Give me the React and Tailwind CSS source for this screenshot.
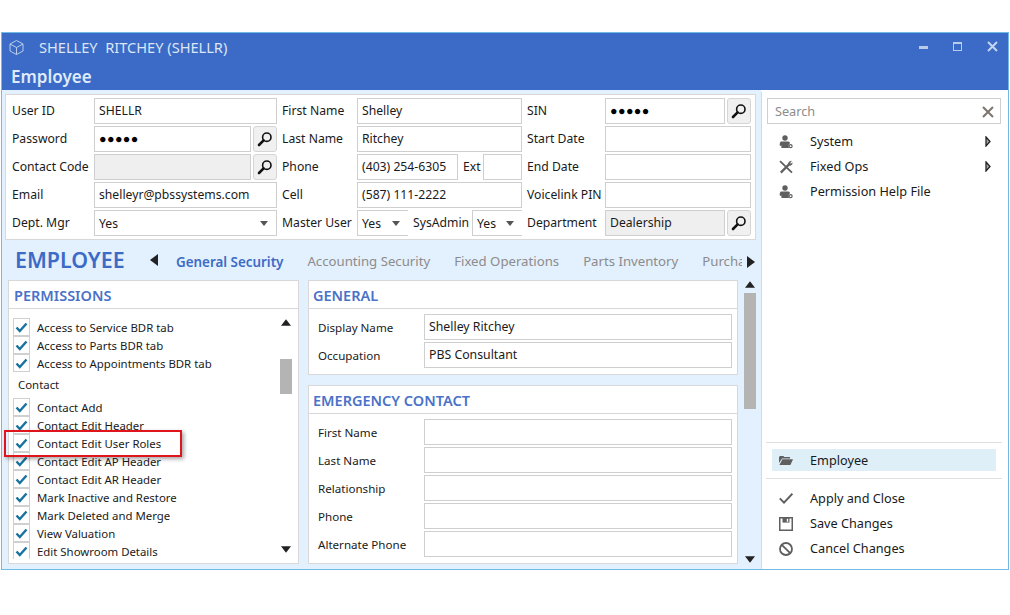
import React from 'react';

const SearchIcon = () => (
    <svg width="16" height="16" viewBox="0 0 16 16" fill="none">
        <circle cx="9.8" cy="6.2" r="4.2" stroke="#111" strokeWidth="1.6" />
        <path d="M6.6 9.4 2 14" stroke="#111" strokeWidth="2.6" strokeLinecap="round" />
    </svg>
);

const UserIcon = () => (
    <svg width="14" height="14" viewBox="0 0 14 14">
        <circle cx="6" cy="3" r="2.7" fill="#5f5f5f" />
        <path d="M2.2 6.4h7.2c1 0 1.4.8 1.6 1.8l-1.2 1.2V13H2.4V10.6L1.4 11 .6 10c.2-2 .6-3.6 1.6-3.6z" fill="#5f5f5f" />
        <circle cx="11.6" cy="11.2" r="1.5" fill="none" stroke="#5f5f5f" strokeWidth="1.2" />
    </svg>
);

const ToolsIcon = () => (
    <svg width="14" height="14" viewBox="0 0 14 14" fill="none">
        <path d="M1 1.2 13 12.6" stroke="#5f5f5f" strokeWidth="1.8" />
        <path d="M1.8 12.6 10 4.4" stroke="#5f5f5f" strokeWidth="2.2" />
        <path d="M8.8 3.4 10.6 1.2 13 0.8 11.2 3 11.8 3.8 13.6 2.2 13.2 4.6 11 6z" fill="#5f5f5f" />
    </svg>
);

const FolderIcon = () => (
    <svg width="14" height="9" viewBox="0 0 14 9">
        <path d="M0 1.2 .8 0h3.6l.8 1H11v1.4H3L0 7z" fill="#5f5f5f" />
        <path d="M3.4 3.2H14L11.4 9H.4z" fill="#5f5f5f" />
    </svg>
);

const TickIcon = () => (
    <svg width="14" height="11" viewBox="0 0 14 11" fill="none"><path d="M.8 5.4 5 9.6 13.4.8" stroke="#5f5f5f" strokeWidth="2" /></svg>
);

const SaveIcon = () => (
    <svg width="14" height="14" viewBox="0 0 14 14" fill="none">
        <path d="M.75.75h12.5v12.5H.75z" stroke="#5f5f5f" strokeWidth="1.5" />
        <path d="M3.5 1h7v4.6h-7z" fill="#5f5f5f" />
        <path d="M7.8 1.8h1.4v3H7.8z" fill="#fff" />
    </svg>
);

const BanIcon = () => (
    <svg width="14" height="14" viewBox="0 0 14 14" fill="none">
        <circle cx="7" cy="7" r="6" stroke="#5f5f5f" strokeWidth="1.8" />
        <path d="M2.8 2.8l8.4 8.4" stroke="#5f5f5f" strokeWidth="1.8" />
    </svg>
);

const CheckBox = () => (
    <div className="w-[17px] h-[18px] shrink-0 border border-[#d0d0d0] flex items-center justify-center bg-white">
        <svg width="13" height="11" viewBox="0 0 13 11" fill="none">
            <path d="M1.5 5.5 4.8 9 11.5 1.5" stroke="#17729f" strokeWidth="2.4" />
        </svg>
    </div>
);

const Triangle = ({ dir, className }) => {
    const paths = { up: '0,8 6,0 12,8', down: '0,0 12,0 6,8', left: '8,0 8,12 0,6', right: '0,0 8,6 0,12' };
    const vert = dir === 'up' || dir === 'down';
    return (
        <svg width={vert ? 12 : 8} height={vert ? 8 : 12} viewBox={vert ? '0 0 12 8' : '0 0 8 12'} className={className}>
            <polygon points={paths[dir]} fill="#222" />
        </svg>
    );
};

const Box = ({ children, className = 'bg-white' }) => (
    <div className={`h-[26px] border border-[#cfcfcf] flex items-center pl-[4px] text-[#1a1a1a] ${className}`}>{children}</div>
);

const Dots = () => <span className="text-[12.5px] tracking-[0.4px] leading-none text-black">●●●●●</span>;

const Btn = () => (
    <div className="w-[24px] h-[26px] ml-[2px] shrink-0 border border-[#d5d5d5] rounded-[3px] bg-[#f0f0f0] flex items-center justify-center"><SearchIcon /></div>
);

const Caret = () => (
    <svg width="8" height="5" viewBox="0 0 8 5"><polygon points="0,0 8,0 4,5" fill="#555" /></svg>
);

const Row = ({ children }) => <div className="h-[26px] flex items-center">{children}</div>;

const Label = ({ children, w }) => <div className={`${w} shrink-0 whitespace-nowrap`}>{children}</div>;

const perms = [
    { t: 'Access to Service BDR tab', c: true },
    { t: 'Access to Parts BDR tab', c: true },
    { t: 'Access to Appointments BDR tab', c: true },
    { t: 'Contact', c: false },
    { t: 'Contact Add', c: true },
    { t: 'Contact Edit Header', c: true },
    { t: 'Contact Edit User Roles', c: true },
    { t: 'Contact Edit AP Header', c: true },
    { t: 'Contact Edit AR Header', c: true },
    { t: 'Mark Inactive and Restore', c: true },
    { t: 'Mark Deleted and Merge', c: true },
    { t: 'View Valuation', c: true },
    { t: 'Edit Showroom Details', c: true },
];

const Section = ({ title, rows, className = '' }) => (
    <div className={`bg-white border border-[#d8d8d8] ${className}`}>
        <div className="h-[28px] border-b border-[#d8d8d8] flex items-center pl-[4px] pt-[2px] text-[14.5px] font-semibold text-[#4a72c8]">{title}</div>
        <div className="pt-[5px] flex flex-col gap-[2px]">
            {rows.map(r => (
                <div key={r[0]} className="flex items-center">
                    <div className="w-[115px] pl-[9px] pt-[2px] shrink-0 text-[11.6px]">{r[0]}</div>
                    <Box className="w-[308px] bg-white text-[12.3px]">{r[1]}</Box>
                </div>
            ))}
        </div>
    </div>
);

const MenuItem = ({ icon, label, arrow }) => (
    <div className="h-[25px] flex items-center">
        <div className="w-[14px] ml-[17px] mr-[17px] flex justify-center">{icon}</div>
        <div className="flex-1 pt-px">{label}</div>
        {arrow && <svg width="6" height="11" viewBox="0 0 6 11" className="mr-[17px]"><polygon points="1,1 5,5.5 1,10" fill="#aaa" stroke="#222" strokeWidth="1.3" /></svg>}
    </div>
);

export default function App() {
    return (
        <div className="w-[1010px] h-[615px] bg-white pt-[32px] pl-px text-[12.2px] text-[#1a1a1a] overflow-hidden" style={{ fontFamily: '"Noto Sans", sans-serif' }}>
            <div className="w-[1008px] h-[538px] border border-[#6fbbe8] flex flex-col relative">
                {/* title bar */}
                <div className="h-[57px] shrink-0 bg-[#3b6bc6] text-white">
                    <div className="h-[29px] flex items-center pl-[6px]">
                        <svg width="17" height="17" viewBox="0 0 17 17" fill="none" stroke="#b9cdea" strokeWidth="1">
                            <path d="M8.5 1.5 15 5v7l-6.5 3.5L2 12V5zM2 5l6.5 3.5L15 5M8.5 8.5v7" />
                        </svg>
                        <span className="ml-[14px] text-[14.6px] text-[#dbe6f7] whitespace-pre">SHELLEY  RITCHEY (SHELLR)</span>
                        <div className="ml-auto flex items-center gap-[25px] pr-[10px] -mt-[3px]">
                            <div className="w-[9px] h-[3px] bg-[#b9cbe9] mt-[3px]"></div>
                            <div className="w-[9px] h-[9px] border border-[#b9cbe9] border-t-2"></div>
                            <svg width="11" height="11" viewBox="0 0 11 11"><path d="M1 1l9 9M10 1l-9 9" stroke="#c5d4ee" strokeWidth="2" /></svg>
                        </div>
                    </div>
                    <div className="pl-[9px] pt-[2px] text-[17px] leading-[26px] font-semibold text-[#dfeafa]">Employee</div>
                </div>

                <div className="flex-1 flex min-h-0">
                    {/* main column */}
                    <div className="w-[759px] shrink-0 bg-[#e3f0fd] pt-[4px] pl-[3px] relative">
                        <div className="w-[751px] h-[146px] bg-white border border-[#d8d8d8] pt-[3px] pl-[6px] flex flex-col gap-[2px]">
                            <Row>
                                <Label w="w-[82px]">User ID</Label><Box className="w-[183px] bg-white">SHELLR</Box>
                                <Label w="w-[75px] ml-[5px]">First Name</Label><Box className="w-[165px] bg-white">Shelley</Box>
                                <Label w="w-[78px] ml-[5px]">SIN</Label><Box className="w-[120px] bg-white"><Dots /></Box><Btn />
                            </Row>
                            <Row>
                                <Label w="w-[82px]">Password</Label><Box className="w-[157px] bg-white"><Dots /></Box><Btn />
                                <Label w="w-[75px] ml-[5px]">Last Name</Label><Box className="w-[165px] bg-white">Ritchey</Box>
                                <Label w="w-[78px] ml-[5px]">Start Date</Label><Box className="w-[146px] bg-white"></Box>
                            </Row>
                            <Row>
                                <Label w="w-[82px]">Contact Code</Label><Box className="w-[157px] bg-[#efefef]"></Box><Btn />
                                <Label w="w-[75px] ml-[5px]">Phone</Label><Box className="w-[101px] bg-white">(403) 254-6305</Box>
                                <Label w="w-[25px] pl-[5px]">Ext</Label><Box className="w-[39px] bg-white"></Box>
                                <Label w="w-[78px] ml-[5px]">End Date</Label><Box className="w-[146px] bg-white"></Box>
                            </Row>
                            <Row>
                                <Label w="w-[82px]">Email</Label><Box className="w-[183px] bg-white">shelleyr@pbssystems.com</Box>
                                <Label w="w-[75px] ml-[5px]">Cell</Label><Box className="w-[165px] bg-white">(587) 111-2222</Box>
                                <Label w="w-[78px] ml-[5px]">Voicelink PIN</Label><Box className="w-[146px] bg-white"></Box>
                            </Row>
                            <Row>
                                <Label w="w-[82px]">Dept. Mgr</Label><Box className="w-[183px] bg-white justify-between pr-[8px]"><span className="pt-[2px]">Yes</span><Caret /></Box>
                                <Label w="w-[75px] ml-[5px]">Master User</Label><Box className="w-[51px] bg-white border-r-0 justify-between pr-[8px]"><span className="pt-[2px]">Yes</span><Caret /></Box>
                                <Label w="w-[64px] pl-[5px]">SysAdmin</Label><Box className="w-[50px] bg-white border-r-0 justify-between pr-[8px]"><span className="pt-[2px]">Yes</span><Caret /></Box>
                                <Label w="w-[78px] ml-[5px]">Department</Label><Box className="w-[120px] bg-[#efefef]">Dealership</Box><Btn />
                            </Row>
                        </div>

                        {/* tabs */}
                        <div className="h-[40px] flex items-center w-[751px]">
                            <div className="ml-[10px] w-[136px] shrink-0 text-[21.4px] font-semibold text-[#3b6bc6] leading-none">EMPLOYEE</div>
                            <Triangle dir="left" className="shrink-0 -ml-px" />
                            <div className="ml-[18px] flex-1 min-w-0 overflow-hidden flex gap-[24px] text-[13.2px] whitespace-nowrap text-[#8c8c8c] pt-[5px]">
                                <span className="font-semibold text-[#3b6bc6] text-[13.4px]">General Security</span>
                                <span>Accounting Security</span>
                                <span>Fixed Operations</span>
                                <span>Parts Inventory</span>
                                <span>Purchasing</span>
                            </div>
                            <Triangle dir="right" className="shrink-0 ml-[5px] mr-[1px] mt-[3px]" />
                        </div>

                        <div className="flex">
                            {/* permissions */}
                            <div className="w-[291px] h-[284px] ml-[3px] shrink-0 bg-white border border-[#d8d8d8] flex flex-col">
                                <div className="h-[28px] shrink-0 border-b border-[#d8d8d8] flex items-center pl-[5px] pt-[2px] text-[14.5px] font-semibold text-[#4a72c8]">PERMISSIONS</div>
                                <div className="flex-1 flex min-h-0">
                                    <div className="w-[270px] h-[245px] mt-[5px] overflow-hidden">
                                        <div className="pl-[4px] pt-[4px] text-[11.4px]">
                                            {perms.map(p => p.c ? (
                                                <div key={p.t} className="h-[18px] flex items-center">
                                                    <CheckBox />
                                                    <span className="ml-[7px] pt-px whitespace-nowrap">{p.t}</span>
                                                </div>
                                            ) : (
                                                <div key={p.t} className="h-[26px] flex items-center pl-[5px]">{p.t}</div>
                                            ))}
                                        </div>
                                    </div>
                                    <div className="w-[12px] ml-[1px] flex flex-col items-center pt-[10px] pb-[10px]">
                                        <Triangle dir="up" className="w-[10px] h-[7px]" />
                                        <div className="w-[12px] h-[35px] bg-[#b4b4b4] mt-[33px]"></div>
                                        <Triangle dir="down" className="mt-auto w-[10px] h-[7px]" />
                                    </div>
                                </div>
                            </div>

                            <div className="ml-[9px] w-[430px] flex flex-col gap-[10px]">
                                <Section title="GENERAL" rows={[['Display Name', 'Shelley Ritchey'], ['Occupation', 'PBS Consultant']]} className="h-[95px]" />
                                <Section title="EMERGENCY CONTACT" rows={[['First Name', ''], ['Last Name', ''], ['Relationship', ''], ['Phone', ''], ['Alternate Phone', '']]} className="h-[179px]" />
                            </div>

                            <div className="w-[12px] ml-[6px] h-[284px] flex flex-col items-center">
                                <Triangle dir="up" className="mt-[1px] w-[10px] h-[7px]" />
                                <div className="w-[12px] h-[116px] bg-[#b4b4b4] mt-[5px]"></div>
                                <Triangle dir="down" className="mt-auto mb-[1px] w-[10px] h-[7px]" />
                            </div>
                        </div>

                        {/* red callout */}
                        <div className="absolute left-[2px] top-[340px] w-[178px] h-[27px] border-2 border-[#e0141c] shadow-[2px_2px_4px_rgba(0,0,0,0.35)]"></div>
                    </div>

                    {/* sidebar */}
                    <div className="flex-1 border-l border-[#d8d8d8] bg-white flex flex-col mt-[2px] pt-[6px] text-[12.7px]">
                        <div className="mx-[5px] w-[234px] h-[26px] border border-[#cfcfcf] flex items-center justify-between pl-[7px] pr-[6px] pt-px text-[#8c8c8c]">
                            Search
                            <svg width="12" height="12" viewBox="0 0 12 12"><path d="M1 1l10 10M11 1 1 11" stroke="#7d746c" strokeWidth="2" /></svg>
                        </div>
                        <div className="mt-[5px]">
                            <MenuItem icon={<UserIcon />} label="System" arrow />
                            <MenuItem icon={<ToolsIcon />} label="Fixed Ops" arrow />
                            <MenuItem icon={<UserIcon />} label="Permission Help File" />
                        </div>
                        <div className="mt-auto">
                            <div className="mx-[4px] w-[236px] border-t border-[#e0e0e0]"></div>
                            <div className="mx-[10px] w-[224px] h-[22px] mt-[6px] mb-[7px] bg-[#deeff8] flex items-center">
                                <div className="w-[14px] ml-[7px] mr-[17px] flex justify-center"><FolderIcon /></div>
                                <span className="pt-px">Employee</span>
                            </div>
                            <div className="mx-[4px] w-[236px] border-t border-[#e0e0e0]"></div>
                            <div className="mt-[7px] mb-[8px]">
                                <MenuItem icon={<TickIcon />} label="Apply and Close" />
                                <MenuItem icon={<SaveIcon />} label="Save Changes" />
                                <MenuItem icon={<BanIcon />} label="Cancel Changes" />
                            </div>
                        </div>
                    </div>
                </div>
            </div>
        </div>
    );
}
